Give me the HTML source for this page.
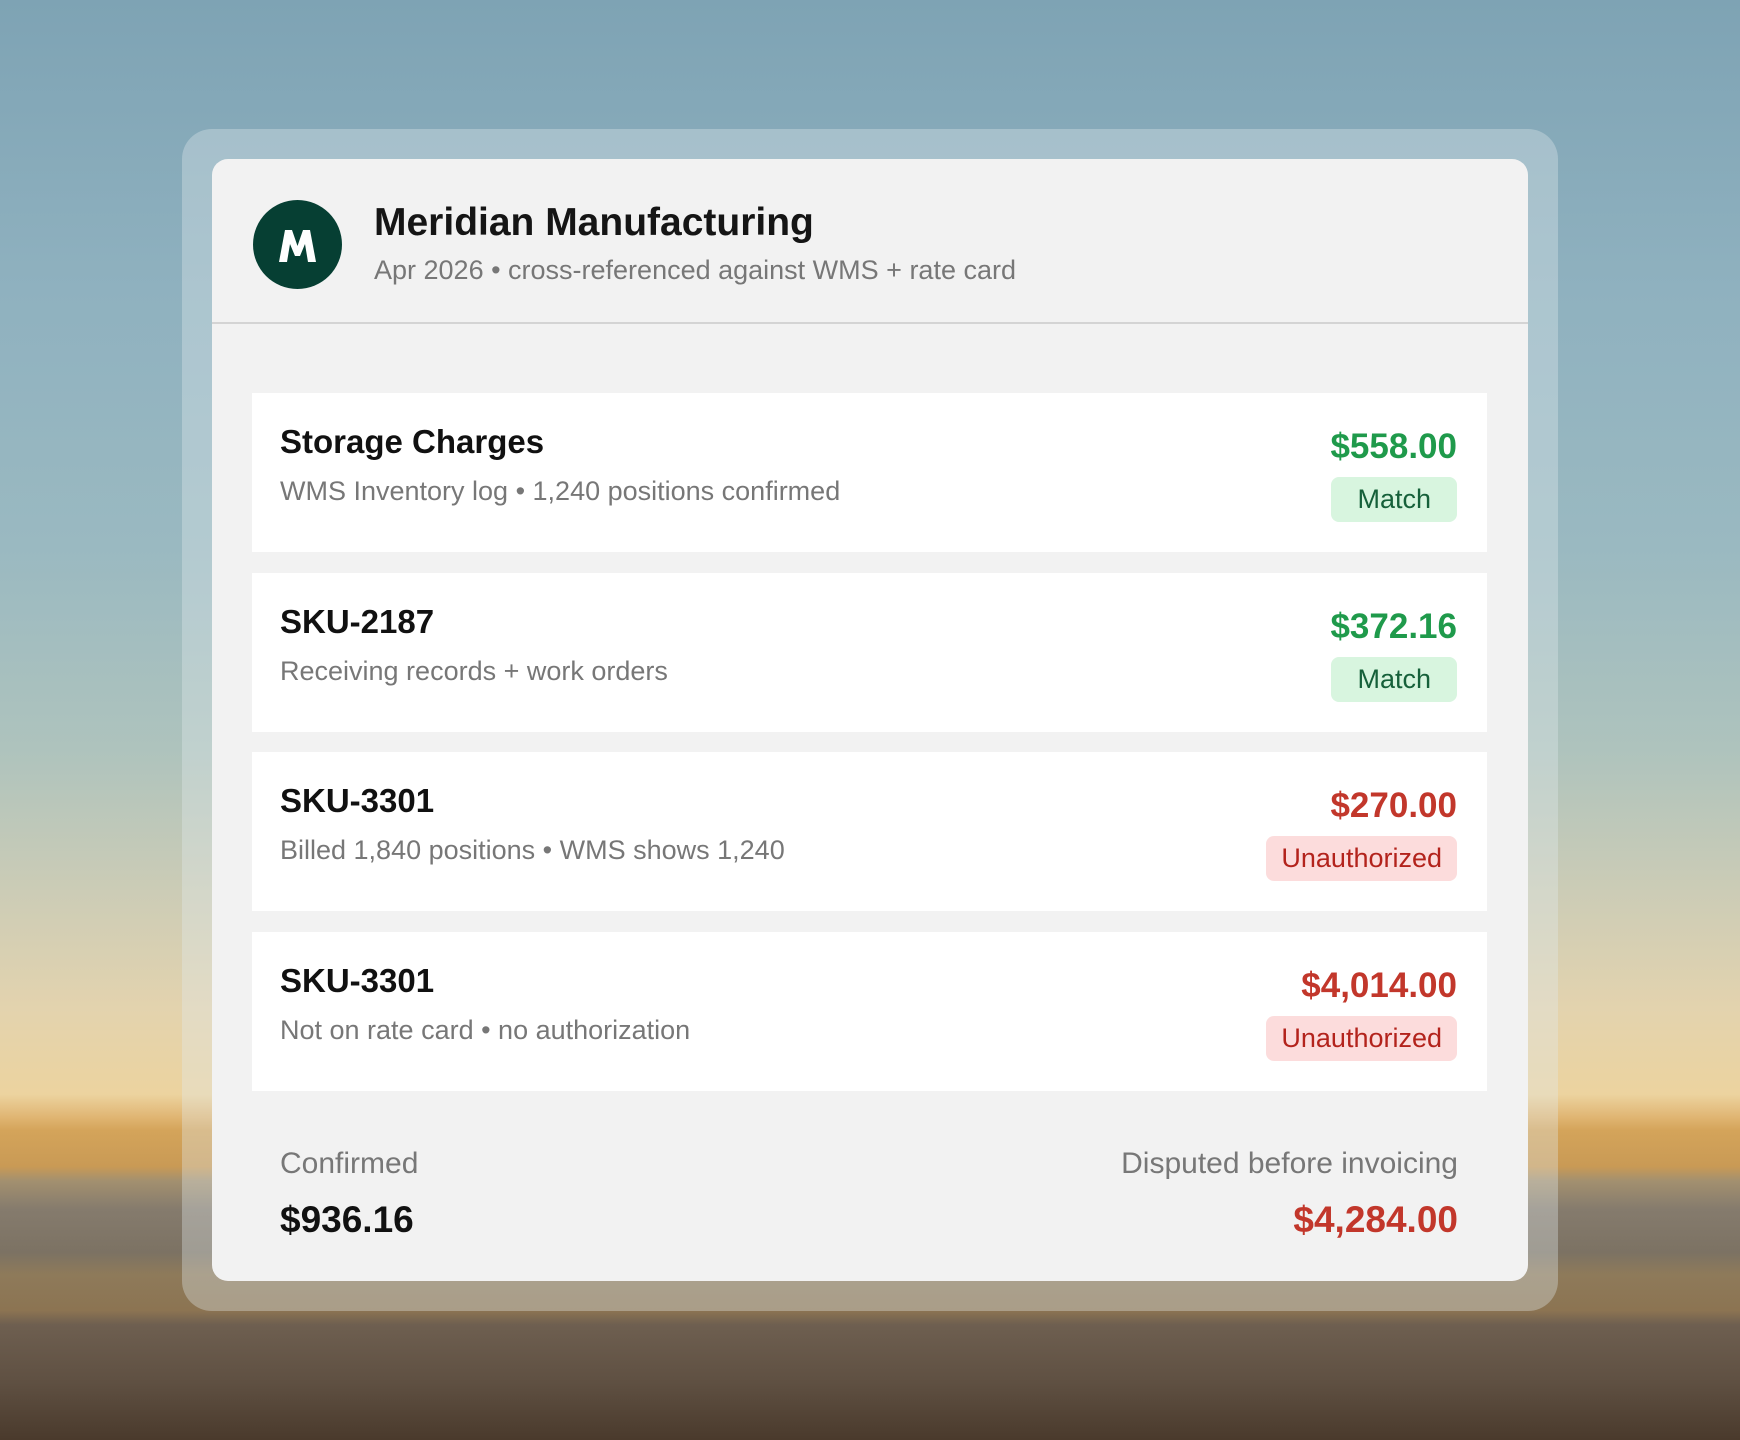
<!DOCTYPE html>
<html><head><meta charset="utf-8"><style>
*{margin:0;padding:0;box-sizing:border-box}
body{width:1740px;height:1440px;position:relative;overflow:hidden;font-family:"Liberation Sans",sans-serif;
background:linear-gradient(180deg,#7ea3b4 0%,#8fb1bf 20%,#9ab9c1 38%,#aec3bd 52%,#cfcdb5 63%,#e3d3ae 70%,#ecd39f 76%,#e0b572 77.6%,#d4a45a 78.5%,#c99a55 81%,#a3906f 82%,#857b6d 84%,#7c7263 87%,#8e7a5a 88.5%,#8c7452 91%,#6e5f50 92%,#5f5042 96%,#4a3a2c 100%)}
.glass{position:absolute;left:182px;top:129px;width:1376px;height:1182px;border-radius:30px;background:rgba(225,235,238,0.35)}
.card{position:absolute;left:212px;top:159px;width:1316px;height:1122px;border-radius:16px;background:#f2f2f2;overflow:hidden}
.hdr{position:absolute;left:0;top:0;width:100%;height:165px;border-bottom:2px solid #d4d4d4}
.av{position:absolute;left:41px;top:41px;width:89px;height:89px;border-radius:50%;background:#063f33}
.t{position:absolute;left:162px;top:42px;font-size:39px;font-weight:bold;color:#151515}
.s{position:absolute;left:162px;top:96px;font-size:27px;color:#777}
.row{position:absolute;left:40px;width:1235px;height:159px;background:#fff}
.rt{position:absolute;left:28px;top:30px;font-size:33px;font-weight:bold;color:#111}
.rs{position:absolute;left:28px;top:83px;font-size:27px;color:#777}
.amt{position:absolute;right:30px;top:34px;font-size:35px;font-weight:bold}
.b{position:absolute;right:30px;top:84px;height:45px;line-height:45px;padding:0 26px;border-radius:8px;font-size:27px}
.g{color:#1f9a4b}.gb{background:#d8f5df;color:#16603a}
.r{color:#c2372b}.rb{background:#fcdcdc;color:#b3231c}
</style></head><body>
<div class="glass"></div>
<div class="card">
 <div class="hdr">
  <div class="av"><svg width="89" height="89" viewBox="0 0 89 89"><path d="M26 62 L32 30 L39 30 L44.5 46 L50 30 L57 30 L63 62 L55 62 L52 44 L47 56 L42 56 L37 44 L34 62 Z" fill="#fff"/></svg></div>
  <div class="t">Meridian Manufacturing</div>
  <div class="s">Apr 2026 • cross-referenced against WMS + rate card</div>
 </div>
 <div class="row" style="top:234px"><div class="rt">Storage Charges</div><div class="rs">WMS Inventory log • 1,240 positions confirmed</div><div class="amt g">$558.00</div><div class="b gb">Match</div></div>
 <div class="row" style="top:414px"><div class="rt">SKU-2187</div><div class="rs">Receiving records + work orders</div><div class="amt g">$372.16</div><div class="b gb">Match</div></div>
 <div class="row" style="top:593px"><div class="rt">SKU-3301</div><div class="rs">Billed 1,840 positions • WMS shows 1,240</div><div class="amt r">$270.00</div><div class="b rb" style="padding:0 15px">Unauthorized</div></div>
 <div class="row" style="top:773px"><div class="rt">SKU-3301</div><div class="rs">Not on rate card • no authorization</div><div class="amt r">$4,014.00</div><div class="b rb" style="padding:0 15px">Unauthorized</div></div>
 <div style="position:absolute;left:68px;top:988px;font-size:30px;color:#777">Confirmed</div>
 <div style="position:absolute;left:68px;top:1040px;font-size:37px;font-weight:bold;color:#111">$936.16</div>
 <div style="position:absolute;right:70px;top:988px;font-size:30px;color:#777">Disputed before invoicing</div>
 <div style="position:absolute;right:70px;top:1040px;font-size:37px;font-weight:bold;color:#c2372b">$4,284.00</div>
</div>
</body></html>
